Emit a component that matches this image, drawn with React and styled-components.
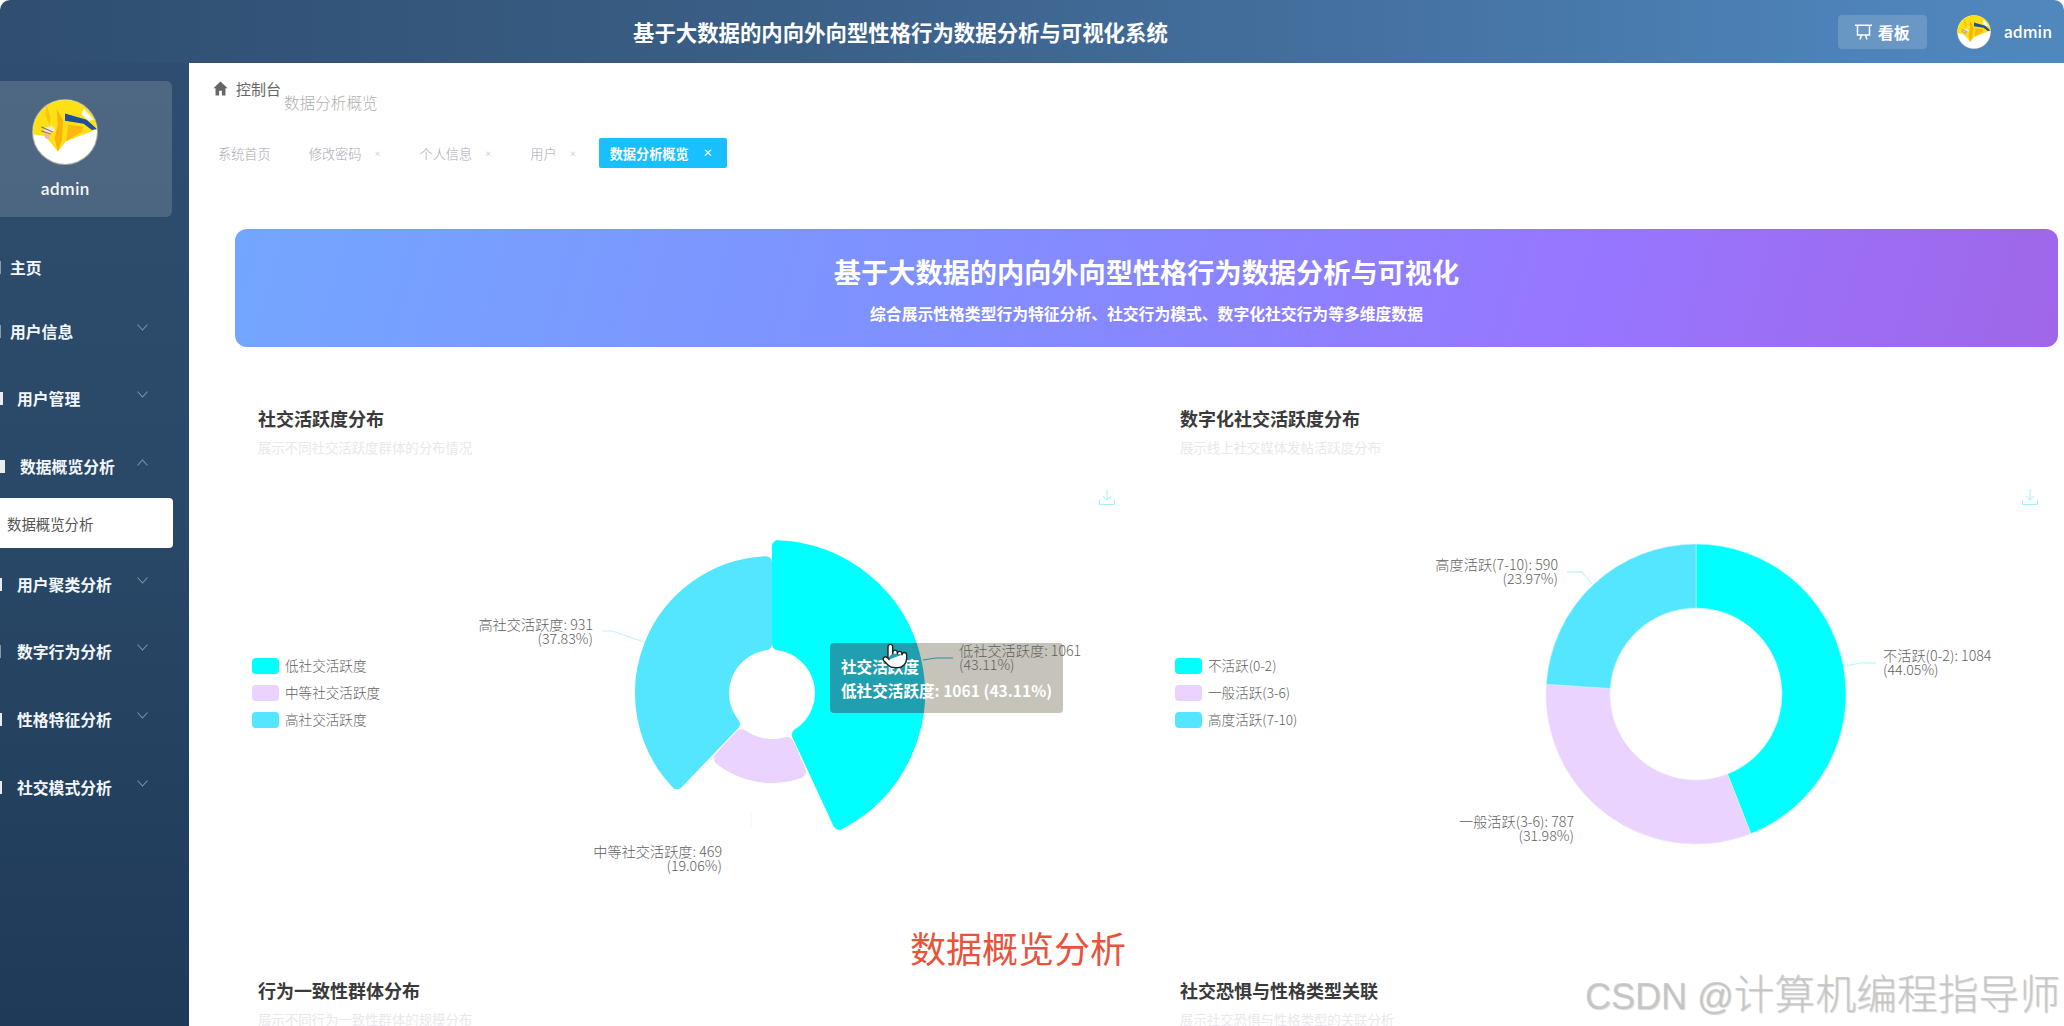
import React from "react";
import styled, { createGlobalStyle } from "styled-components";
import { Pointer } from "lucide-react";

const Global = createGlobalStyle`
  html, body { margin: 0; padding: 0; height: 100%; background: #fff; overflow: hidden; }
  body { font-family: "Noto Sans CJK SC", "Noto Sans", sans-serif; }
  * { box-sizing: border-box; }
`;

const Shell = styled.div`
  width: 2064px; height: 1026px; display: flex; flex-direction: column; overflow: hidden; position: relative;
`;
const Header = styled.header`
  height: 63px; flex: none; display: flex; align-items: center; padding-right: 12px; color: #fff;
  border-radius: 10px 10px 0 0;
  background: linear-gradient(90deg, #2f4e70 0%, #395d84 35%, #44709f 65%, #4d83b9 90%, #5087bd 100%);
`;
const HeaderTitle = styled.h1`
  margin: 0 0 0 633px; font-size: 21.4px; font-weight: 700; white-space: nowrap; line-height: 1;
`;
const HeaderRight = styled.div`
  margin-left: auto; display: flex; align-items: center;
`;
const BoardButton = styled.div`
  width: 89px; height: 34px; display: flex; align-items: center; gap: 6px; padding-left: 17px;
  background: rgba(255,255,255,.16); border-radius: 4px; font-size: 16px; font-weight: 700; margin-right: 30px;
`;
const UserName = styled.span`
  font-size: 15.8px; font-weight: 500; margin-left: 13px; line-height: 1;
`;
const Body = styled.div`
  flex: 1; display: flex; min-height: 0;
`;
const Sidebar = styled.aside`
  width: 189px; flex: none; overflow: hidden; padding-top: 18px; color: #fff;
  background: linear-gradient(180deg, #2f4e6f 0%, #294766 50%, #1f3a58 100%);
`;
const ProfileCard = styled.div`
  width: 172px; height: 136px; display: flex; flex-direction: column; align-items: center;
  padding: 18px 42px 0 0; background: rgba(255,255,255,.15); border-radius: 0 6px 6px 0;
`;
const ProfileName = styled.div`
  margin-top: 13px; font-size: 16px; font-weight: 500; line-height: 20px; color: #f4f7fa;
`;
const NavList = styled.nav`
  margin-top: 17px;
`;
const NavRow = styled.div`
  height: 67px; display: flex; align-items: center; padding-right: 41px;
  margin-top: ${(p) => p.$mt || 0}px;
`;
const NavStub = styled.span`
  width: ${(p) => p.$w}px; height: 13px; background: #fff; flex: none; opacity: ${(p) => (p.$w > 1 ? 0.9 : 0.45)};
`;
const NavLabel = styled.span`
  margin-left: ${(p) => p.$x}px; font-size: 15.8px; font-weight: 700; white-space: nowrap; color: #f2f6fa;
`;
const NavChevron = styled.svg`
  width: 11px; height: 7px; margin-left: auto; margin-top: -8px; flex: none;
  fill: none; stroke: #7d93aa; stroke-width: 1.1;
`;
const NavSub = styled.div`
  width: 173px; height: 50px; margin-top: -2px; margin-bottom: 3px; display: flex; align-items: center;
  padding-left: 7px; background: #fff; color: #555; font-size: 14.4px; border-radius: 0 4px 4px 0;
`;
const Main = styled.main`
  flex: 1; min-width: 0; padding: 16px 6px 0 46px; overflow: hidden;
`;
const Crumbs = styled.div`
  display: flex; align-items: flex-start; margin-left: -23px; height: 33px; font-size: 15px; line-height: 20px;
`;
const HomeIcon = styled.svg`
  width: 17px; height: 17px; fill: #666; margin-top: 1px; margin-right: 7px; flex: none;
`;
const CrumbRoot = styled.span`
  color: #666;
`;
const CrumbLeaf = styled.span`
  color: #b0b0b0; margin: 13px 0 0 3px; font-size: 15.6px; font-weight: 300;
`;
const Tabs = styled.div`
  display: flex; align-items: center; gap: 16px; height: 30px; margin: 26px 0 0 -28px;
`;
const Tab = styled.div`
  height: 30px; display: flex; align-items: center; padding: 0 ${(p) => (p.$active ? "16px" : "11px")} 0 11px;
  gap: ${(p) => (p.$active ? "14px" : "12px")}; font-size: 13.2px; border-radius: 2px;
  font-weight: ${(p) => (p.$active ? 700 : 300)}; color: ${(p) => (p.$active ? "#fff" : "#a8a8b4")};
  background: ${(p) => (p.$active ? "#19c0ff" : "transparent")};
  margin-left: ${(p) => (p.$active ? "-5px" : "0")}; white-space: nowrap;
`;
const TabClose = styled.span`
  width: 8px; font-size: ${(p) => (p.$active ? "10px" : "7px")}; font-weight: ${(p) => (p.$active ? 700 : 400)};
  line-height: 1; text-align: center; color: ${(p) => (p.$active ? "#fff" : "#b8b8c2")};
`;
const Banner = styled.section`
  height: 118px; margin-top: 61px; border-radius: 12px; color: #fff; display: flex; flex-direction: column;
  align-items: center; padding-top: 23px;
  background: linear-gradient(105deg, #73a6ff 0%, #8090ff 38%, #9776ff 74%, #a066e8 100%);
`;
const BannerTitle = styled.h2`
  margin: 0; font-size: 27.2px; font-weight: 700; line-height: 38px; white-space: nowrap;
`;
const BannerSub = styled.p`
  margin: 13px 0 0; font-size: 15.8px; font-weight: 600; line-height: 22px; white-space: nowrap;
`;
const ChartGrid = styled.div`
  display: grid; grid-template-columns: 901px 901px; column-gap: 21px; row-gap: 17px; margin-top: 58px;
`;
const ChartCard = styled.article`
  padding: 0;
`;
const CardTitle = styled.h3`
  margin: 0 0 0 23px; font-size: 18px; font-weight: 600; line-height: 26px; color: #3a3a3a; white-space: nowrap;
`;
const CardSub = styled.p`
  margin: 6px 0 0 23px; font-size: 13.4px; line-height: 20px; color: #e8e8ee; white-space: nowrap;
`;
const ChartSvg = styled.svg`
  display: block; width: 901px; height: 490px; margin-top: 13px; overflow: visible;
`;
const SvgLabel = styled.text`
  font-size: 14.2px; fill: #5f5f5f; dominant-baseline: central; font-weight: 300;
`;
const LegendText = styled.text`
  font-size: 13.6px; fill: #5f5f5f; dominant-baseline: central; font-weight: 300;
`;
const TipTitle = styled.text`
  font-size: 15.6px; font-weight: 700; fill: #fff; dominant-baseline: central;
`;
const TipValue = styled.text`
  font-size: 15.6px; font-weight: 700; fill: #fff; dominant-baseline: central;
`;
const Caption = styled.div`
  position: absolute; left: 910px; top: 923px; font-size: 36px; line-height: 48px; color: #e8533b; white-space: nowrap;
`;
const Watermark = styled.div`
  position: absolute; left: 1585px; top: 967px; font-size: 36px; line-height: 50px; white-space: nowrap;
  font-family: "Liberation Sans", "Noto Sans CJK SC", sans-serif;
  color: rgba(190,190,190,.75); text-shadow: 1px 1px 1px rgba(120,120,120,.3);
`;
const WatermarkCjk = styled.span`
  font-family: "Noto Sans CJK SC", sans-serif; font-size: 40.8px; font-weight: 300;
`;

const COLORS = ["#00ffff", "#ead3fe", "#55e6ff"];
const polar = (cx, cy, r, deg) => {
  const a = ((deg - 90) * Math.PI) / 180;
  return [cx + r * Math.cos(a), cy + r * Math.sin(a)];
};
const sector = (cx, cy, r0, r1, a0, a1, ins) => {
  const R = r1 - ins;
  const r = r0 + ins;
  const da = (Math.asin(ins / R) * 180) / Math.PI;
  const db = (Math.asin(ins / r) * 180) / Math.PI;
  const p1 = polar(cx, cy, R, a0 + da);
  const p2 = polar(cx, cy, R, a1 - da);
  const p3 = polar(cx, cy, r, a1 - db);
  const p4 = polar(cx, cy, r, a0 + db);
  const l1 = a1 - a0 - 2 * da > 180 ? 1 : 0;
  const l2 = a1 - a0 - 2 * db > 180 ? 1 : 0;
  return `M${p1} A${R} ${R} 0 ${l1} 1 ${p2} L${p3} A${r} ${r} 0 ${l2} 0 ${p4} Z`;
};

const Avatar = ({ size, id }) => (
  <svg width={size} height={size} viewBox="0 0 64 64" style={{ flex: "none" }}>
    <defs>
      <clipPath id={id}><circle cx="32" cy="32" r="31" /></clipPath>
    </defs>
    <circle cx="32" cy="32" r="32" fill="#a9b0a0" />
    <g clipPath={`url(#${id})`}>
      <rect width="64" height="64" fill="#fff" />
      <path d="M0 0H64V29L33 41L25 51L13 36L0 34Z" fill="#ffe014" />
      <path d="M35 25L50 27L48 32L33 41Z" fill="#fdb70f" />
      <path d="M24 10L30 20L29 40L25 51L22 38L25 25Z" fill="#fbb00c" />
      <path d="M14 5L18 18L17 26L13 15Z" fill="#f8c40f" />
      <path d="M32 14L53 20L63 29L58 30L50 24L32 21Z" fill="#1f4f9c" />
      <path d="M50 9L60 20L55 21L48 15Z" fill="#f4f8ff" />
      <path d="M12 30Q17 31 21 28" stroke="#f4e6d8" strokeWidth="6" fill="none" />
      <path d="M9 27L20 32M9 31L18 34" stroke="#8b7f78" strokeWidth="1.3" />
      <circle cx="15" cy="36" r="2.5" fill="#f5b79a" />
    </g>
  </svg>
);

const Chevron = ({ up }) => (
  <NavChevron viewBox="0 0 11 7">
    <path d={up ? "M.5 6.5L5.5 1l5 5.5" : "M.5 .5L5.5 6l5-5.5"} />
  </NavChevron>
);

const SaveIcon = ({ x, y }) => (
  <g fill="none" stroke="#9ff2fb" strokeWidth="1">
    <path d={`M${x} ${y - 8}V${y + 3}M${x - 4} ${y - 1}L${x} ${y + 3}L${x + 4} ${y - 1}`} />
    <path d={`M${x - 7.5} ${y + 3}V${y + 7.5}H${x + 7.5}V${y + 3}`} />
  </g>
);

const LABELS = [
  { chart: 0, x: 593, y: 624, anchor: "end", a: "高社交活跃度: 931", b: "(37.83%)" },
  { chart: 0, x: 722, y: 851, anchor: "end", a: "中等社交活跃度: 469", b: "(19.06%)" },
  { chart: 0, x: 959, y: 650, anchor: "start", a: "低社交活跃度: 1061", b: "(43.11%)" },
  { chart: 1, x: 1883, y: 655, anchor: "start", a: "不活跃(0-2): 1084", b: "(44.05%)" },
  { chart: 1, x: 1574, y: 821, anchor: "end", a: "一般活跃(3-6): 787", b: "(31.98%)" },
  { chart: 1, x: 1558, y: 564, anchor: "end", a: "高度活跃(7-10): 590", b: "(23.97%)" },
];

const Labels = ({ chart }) =>
  LABELS.filter((l) => l.chart === chart).map((l) => (
    <React.Fragment key={l.a}>
      <SvgLabel x={l.x} y={l.y} textAnchor={l.anchor}>{l.a}</SvgLabel>
      <SvgLabel x={l.x} y={l.y + 14} textAnchor={l.anchor}>{l.b}</SvgLabel>
    </React.Fragment>
  ));

const Legend = ({ x, items }) =>
  items.map((t, i) => {
    const y = [658, 685, 712][i];
    return (
      <React.Fragment key={t}>
        <rect x={x} y={y} width="27" height="16" rx="4" fill={COLORS[i]} />
        <LegendText x={x + 33} y={y + 6.5}>{t}</LegendText>
      </React.Fragment>
    );
  });

const A0 = 155.2, A1 = 223.8;
const lowSlice = sector(772, 693, 43, 153, 0, A0, 6);

const RoseChart = () => (
  <ChartSvg viewBox="235 470 901 490">
    <defs>
      <clipPath id="tipClip"><rect x="830" y="643" width="233" height="70" rx="4" /></clipPath>
    </defs>
    <SaveIcon x={1107} y={497} />
    <Legend x={252} items={["低社交活跃度", "中等社交活跃度", "高社交活跃度"]} />
    <path d={lowSlice} fill={COLORS[0]} stroke={COLORS[0]} strokeWidth="12" strokeLinejoin="round" />
    <path d={sector(772, 693, 46, 90, A0 + 1, A1 - 1, 7)} fill={COLORS[1]} stroke={COLORS[1]} strokeWidth="14" strokeLinejoin="round" />
    <path d={sector(772, 693, 43, 137, A1, 360, 6)} fill={COLORS[2]} stroke={COLORS[2]} strokeWidth="12" strokeLinejoin="round" />
    <path d="M602 631H612L644 642" fill="none" stroke="#b8f4ff" strokeWidth="1" />
    <path d="M751 812V828" fill="none" stroke="#f6f0fc" strokeWidth="1" />
    <rect x="830" y="643" width="233" height="70" rx="4" fill="#c5c3ba" />
    <g clipPath="url(#tipClip)">
      <path d={lowSlice} fill="#209fb0" stroke="#209fb0" strokeWidth="12" strokeLinejoin="round" />
    </g>
    <path d="M923 660L936 658H953" fill="none" stroke="#2f8f90" strokeWidth="1" />
    <Labels chart={0} />
    <TipTitle x={841} y={666}>社交活跃度</TipTitle>
    <TipValue x={841} y={690}>低社交活跃度: 1061 (43.11%)</TipValue>
    <Pointer x={881} y={641} width={28} height={30} fill="#fff" stroke="#222" strokeWidth={1.2} />
  </ChartSvg>
);

const A = 158.6, B = 158.6 + 115.1;
const RingChart = () => (
  <ChartSvg viewBox="1157 470 901 490">
    <SaveIcon x={2030} y={497} />
    <Legend x={1175} items={["不活跃(0-2)", "一般活跃(3-6)", "高度活跃(7-10)"]} />
    <path d={sector(1696, 694, 86, 150, 0, A, 0)} fill={COLORS[0]} stroke="#c8ffff" strokeWidth=".6" />
    <path d={sector(1696, 694, 86, 150, A, B, 0)} fill={COLORS[1]} stroke="#f4ebff" strokeWidth=".6" />
    <path d={sector(1696, 694, 86, 150, B, 360, 0)} fill={COLORS[2]} stroke="#b9f3ff" strokeWidth=".6" />
    <path d="M1844 666L1861 663H1876" fill="none" stroke="#a8faff" strokeWidth="1" />
    <path d="M1567 572H1582L1592 584" fill="none" stroke="#a8f0ff" strokeWidth="1" />
    <Labels chart={1} />
  </ChartSvg>
);

const NAV = [
  { t: "主页", stub: 1, x: 9 },
  { t: "用户信息", stub: 1, x: 9, mt: -3, c: true },
  { t: "用户管理", stub: 3, x: 14, c: true },
  { t: "数据概览分析", stub: 5, x: 15, c: true, up: true, mt: 1 },
  { t: "用户聚类分析", stub: 2, x: 15, c: true },
  { t: "数字行为分析", stub: 1, x: 16, c: true },
  { t: "性格特征分析", stub: 2, x: 15, c: true, mt: 1 },
  { t: "社交模式分析", stub: 2, x: 15, c: true, mt: 1 },
];

const App = () => (
  <Shell>
    <Global />
    <Header>
      <HeaderTitle>基于大数据的内向外向型性格行为数据分析与可视化系统</HeaderTitle>
      <HeaderRight>
        <BoardButton>
          <svg width="17" height="16" viewBox="0 0 17 16" fill="none" stroke="#fff" strokeWidth="1.5">
            <path d="M0 1.2H17M2.5 1.2V11H14.5V1.2M6.5 11L5 15.5M10.5 11L12 15.5" />
          </svg>
          看板
        </BoardButton>
        <Avatar size={34} id="avHead" />
        <UserName>admin</UserName>
      </HeaderRight>
    </Header>
    <Body>
      <Sidebar>
        <ProfileCard>
          <Avatar size={66} id="avSide" />
          <ProfileName>admin</ProfileName>
        </ProfileCard>
        <NavList>
          {NAV.map((n) => (
            <React.Fragment key={n.t}>
              <NavRow $mt={n.mt}>
                <NavStub $w={n.stub} />
                <NavLabel $x={n.x}>{n.t}</NavLabel>
                {n.c && <Chevron up={n.up} />}
              </NavRow>
              {n.up && <NavSub>数据概览分析</NavSub>}
            </React.Fragment>
          ))}
        </NavList>
      </Sidebar>
      <Main>
        <Crumbs>
          <HomeIcon viewBox="0 0 24 24"><path d="M12 2L2 11.5H5V22H10V15H14V22H19V11.5H22Z" /></HomeIcon>
          <CrumbRoot>控制台</CrumbRoot>
          <CrumbLeaf>数据分析概览</CrumbLeaf>
        </Crumbs>
        <Tabs>
          <Tab>系统首页</Tab>
          <Tab>修改密码<TabClose>×</TabClose></Tab>
          <Tab>个人信息<TabClose>×</TabClose></Tab>
          <Tab>用户<TabClose>×</TabClose></Tab>
          <Tab $active>数据分析概览<TabClose $active>×</TabClose></Tab>
        </Tabs>
        <Banner>
          <BannerTitle>基于大数据的内向外向型性格行为数据分析与可视化</BannerTitle>
          <BannerSub>综合展示性格类型行为特征分析、社交行为模式、数字化社交行为等多维度数据</BannerSub>
        </Banner>
        <ChartGrid>
          <ChartCard>
            <CardTitle>社交活跃度分布</CardTitle>
            <CardSub>展示不同社交活跃度群体的分布情况</CardSub>
            <RoseChart />
          </ChartCard>
          <ChartCard>
            <CardTitle>数字化社交活跃度分布</CardTitle>
            <CardSub>展示线上社交媒体发帖活跃度分布</CardSub>
            <RingChart />
          </ChartCard>
          <ChartCard>
            <CardTitle>行为一致性群体分布</CardTitle>
            <CardSub>展示不同行为一致性群体的规模分布</CardSub>
          </ChartCard>
          <ChartCard>
            <CardTitle>社交恐惧与性格类型关联</CardTitle>
            <CardSub>展示社交恐惧与性格类型的关联分析</CardSub>
          </ChartCard>
        </ChartGrid>
      </Main>
    </Body>
    <Caption>数据概览分析</Caption>
    <Watermark>CSDN @<WatermarkCjk>计算机编程指导师</WatermarkCjk></Watermark>
  </Shell>
);

export default App;
